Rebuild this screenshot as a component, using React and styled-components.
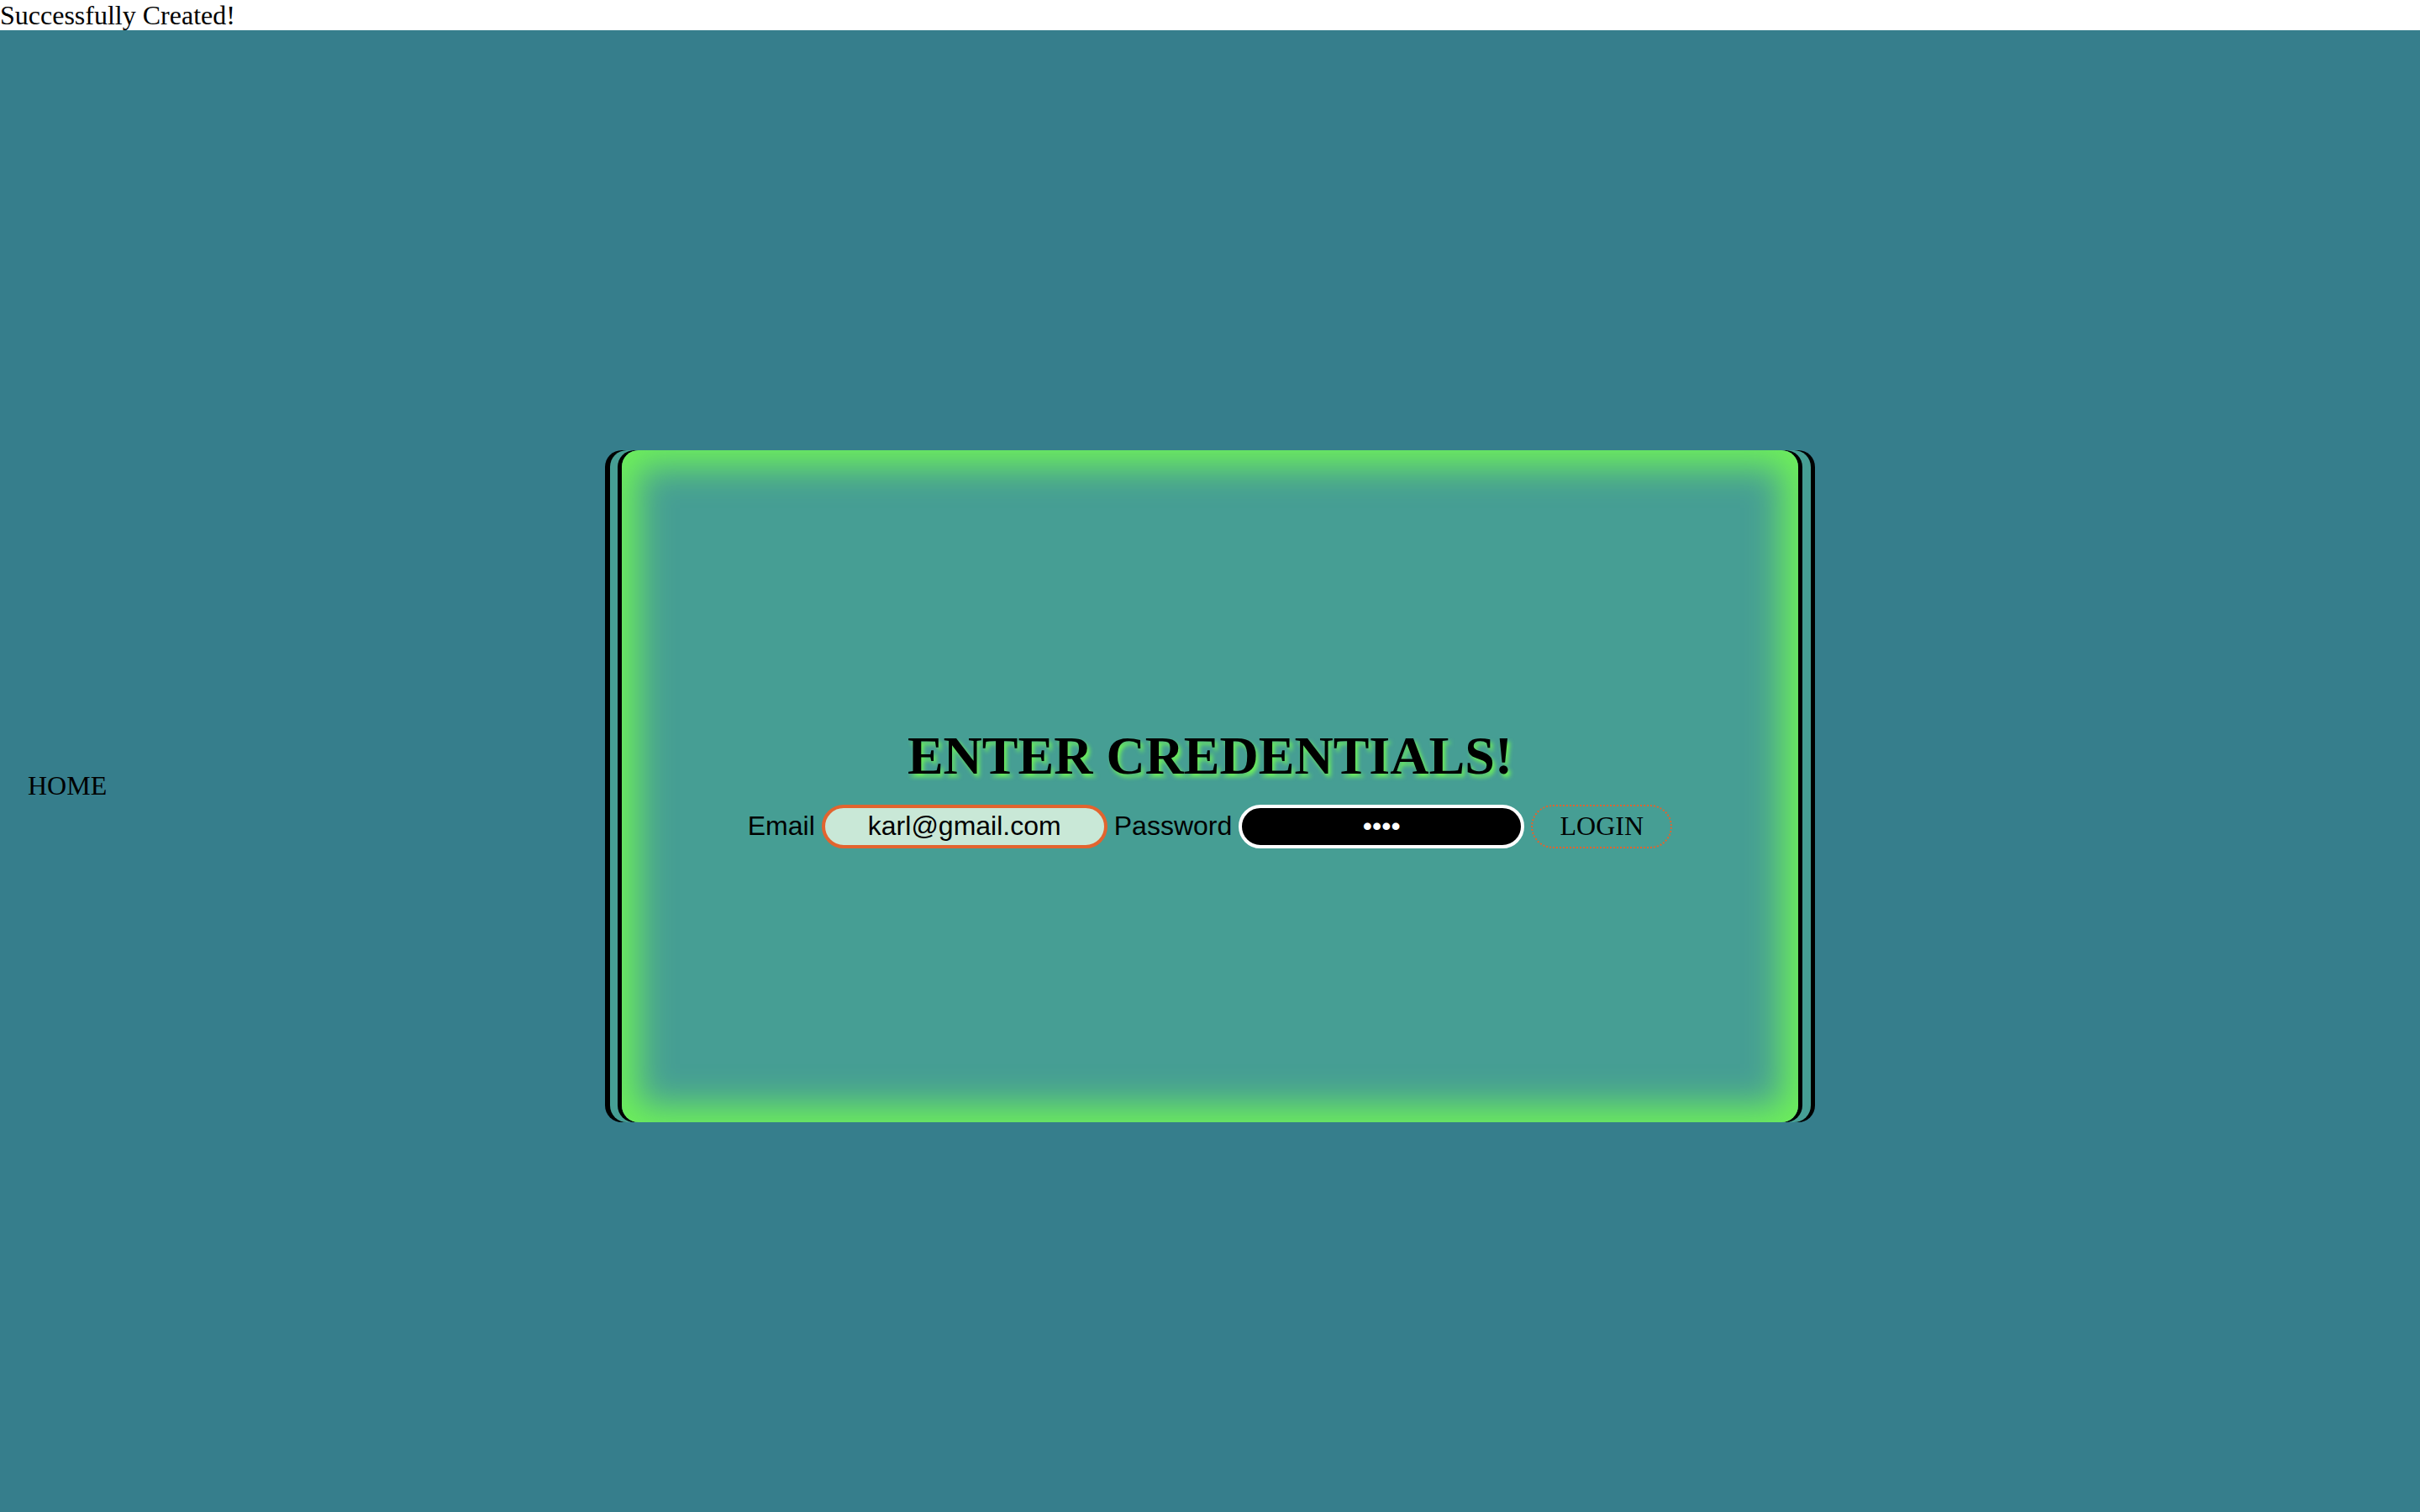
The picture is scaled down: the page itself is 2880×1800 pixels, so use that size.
import React from "react";
import styled, { createGlobalStyle } from "styled-components";

const GlobalStyle = createGlobalStyle`
  html, body {
    margin: 0;
    padding: 0;
    background: #ffffff;
    font-family: "Liberation Serif", "Times New Roman", serif;
    font-size: 32px;
    color: #000;
  }
`;

const Notice = styled.div`
  font-family: "Liberation Serif", "Times New Roman", serif;
  font-size: 32px;
  line-height: 36px;
  height: 36px;
  background: #ffffff;
`;

const Stage = styled.main`
  height: 100vh;
  background: #367e8c;
  display: grid;
  grid-template-columns: 1fr auto 1fr;
  align-items: center;
`;

const HomeLink = styled.div`
  justify-self: start;
  padding-left: 33px;
  padding-bottom: 2px;
  font-family: "Liberation Serif", "Times New Roman", serif;
  font-size: 32px;
  color: #000;
`;

const Card = styled.section`
  width: 1400px;
  height: 800px;
  box-sizing: border-box;
  border-radius: 20px;
  background: #469e94;
  display: flex;
  flex-direction: column;
  align-items: center;
  justify-content: center;
  gap: 21px;
  box-shadow:
    inset 0 0 40px 20px #6ef05a,
    -5px 0 0 0 #000,
    5px 0 0 0 #000,
    -14px 0 0 0 #469e94,
    15px 0 0 0 #469e94,
    -20px 0 0 0 #000,
    20px 0 0 0 #000;
`;

const Title = styled.h1`
  margin: 0;
  font-family: "Liberation Serif", "Times New Roman", serif;
  font-size: 64px;
  font-weight: 700;
  color: #000;
  text-shadow: 3px 4px 5px #6ef05a;
`;

const Row = styled.div`
  display: flex;
  align-items: center;
  gap: 8px;
`;

const Label = styled.label`
  font-family: "Liberation Sans", Arial, sans-serif;
  font-size: 32px;
  color: #000;
`;

const Field = styled.input`
  width: 340px;
  height: 52px;
  box-sizing: border-box;
  border-radius: 26px;
  border: 4px solid ${(p) => (p.$dark ? "#ffffff" : "#e2642f")};
  background: ${(p) => (p.$dark ? "#000000" : "#c9e8d7")};
  color: ${(p) => (p.$dark ? "#ffffff" : "#000000")};
  font-family: "Liberation Sans", Arial, sans-serif;
  font-size: 32px;
  text-align: center;
  padding: 0 12px;
  outline: none;
`;

const LoginButton = styled.button`
  width: 168px;
  height: 52px;
  box-sizing: border-box;
  border-radius: 26px;
  border: 2px dotted #e2642f;
  background: transparent;
  font-family: "Liberation Serif", "Times New Roman", serif;
  font-size: 32px;
  color: #000;
  padding: 0;
  cursor: pointer;
`;

export default function App() {
  return (
    <>
      <GlobalStyle />
      <Notice>Successfully Created!</Notice>
      <Stage>
        <HomeLink>HOME</HomeLink>
        <Card>
          <Title>ENTER CREDENTIALS!</Title>
          <Row>
            <Label htmlFor="email">Email</Label>
            <Field id="email" type="text" value="karl@gmail.com" readOnly />
            <Label htmlFor="password">Password</Label>
            <Field id="password" type="password" value="abcd" readOnly $dark />
            <LoginButton>LOGIN</LoginButton>
          </Row>
        </Card>
        <div />
      </Stage>
    </>
  );
}
